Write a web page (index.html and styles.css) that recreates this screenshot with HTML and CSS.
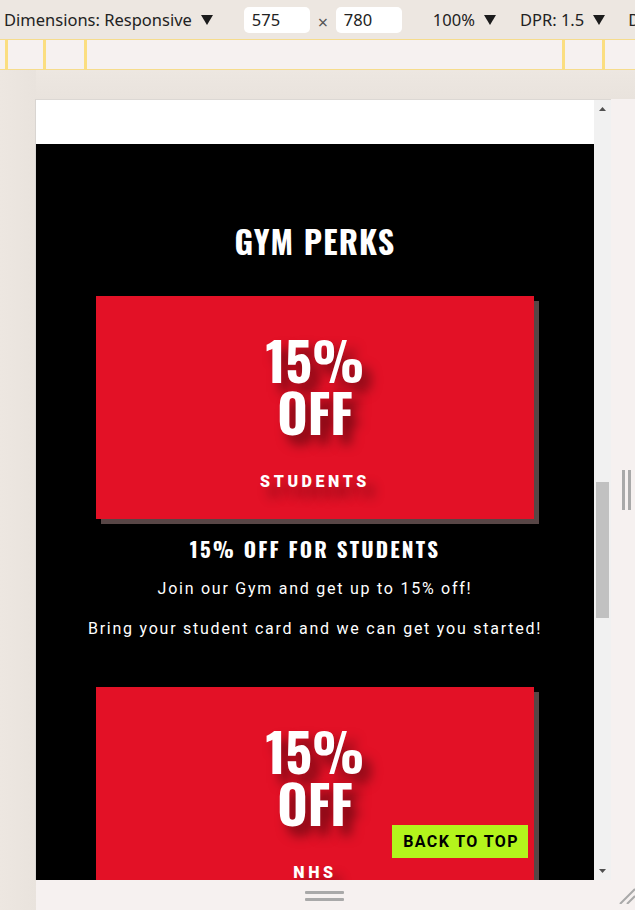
FILE: index.html
```html
<!DOCTYPE html>
<html lang="en">
<head>
<meta charset="utf-8">
<title>Gym Perks - Device Mode</title>
<link rel="stylesheet" href="styles.css">
</head>
<body>
<div class="devtools">
  <div class="toolbar">
    <span class="tb-label">Dimensions: Responsive</span>
    <svg class="caret" width="12" height="10" viewBox="0 0 12 10"><path d="M0 0H12L6 10Z"/></svg>
    <span class="tb-input tb-w">575</span>
    <span class="tb-times">×</span>
    <span class="tb-input">780</span>
    <span class="tb-label tb-zoom">100%</span>
    <svg class="caret" width="12" height="10" viewBox="0 0 12 10"><path d="M0 0H12L6 10Z"/></svg>
    <span class="tb-label tb-dpr">DPR: 1.5</span>
    <svg class="caret" width="12" height="10" viewBox="0 0 12 10"><path d="M0 0H12L6 10Z"/></svg>
    <span class="tb-label tb-more">D</span>
  </div>
  <div class="ruler">
    <span class="mark m1"></span>
    <span class="mark m2"></span>
    <span class="mark m3"></span>
    <span class="mark m4"></span>
    <span class="mark m5"></span>
  </div>
  <div class="stage">
    <div class="gutter"></div>
    <div class="workspace">
      <div class="topspace"></div>
      <div class="devrow">
        <div class="device">
          <div class="page">
            <div class="page-top"></div>
            <section class="perks">
              <h1 class="perks-title">GYM PERKS</h1>
              <div class="perk">
                <div class="card">
                  <h2 class="card-big">15%<br>OFF</h2>
                  <p class="card-tag">STUDENTS</p>
                </div>
                <h3 class="perk-title">15% OFF FOR STUDENTS</h3>
                <p class="perk-text">Join our Gym and get up to 15% off!</p>
                <p class="perk-text">Bring your student card and we can get you started!</p>
              </div>
              <div class="perk perk-next">
                <div class="card">
                  <h2 class="card-big">15%<br>OFF</h2>
                  <p class="card-tag">NHS</p>
                </div>
              </div>
            </section>
            <a class="back-top" href="#">BACK TO TOP</a>
          </div>
          <div class="scrollbar">
            <svg class="sb-arrow" width="7" height="4" viewBox="0 0 7 4"><path d="M3.5 0L7 4H0Z"/></svg>
            <div class="sb-track"><div class="sb-thumb"></div></div>
            <svg class="sb-arrow" width="7" height="4" viewBox="0 0 7 4"><path d="M0 0H7L3.5 4Z"/></svg>
          </div>
        </div>
        <div class="rhandle"><span class="vbar"></span><span class="vbar"></span></div>
      </div>
      <div class="bhandle">
        <div class="hbars"><span class="hbar"></span><span class="hbar"></span></div>
        <svg class="corner" width="18" height="18" viewBox="0 0 18 18"><path d="M18 3L3 18M18 10L10 18" stroke="#a9a9a9" stroke-width="2" fill="none"/></svg>
      </div>
    </div>
  </div>
</div>
</body>
</html>
```
FILE: styles.css
```css
* { box-sizing: border-box; }
html, body { margin: 0; padding: 0; }
body { width: 635px; height: 910px; overflow: hidden; background: #ece6e0; font-family: "Noto Sans", "Open Sans", sans-serif; }

.devtools { display: flex; flex-direction: column; height: 910px; }

.toolbar { height: 39px; display: flex; align-items: center; padding-left: 4px; background: #ede7e1; color: #222; font-size: 16.5px; white-space: nowrap; overflow: hidden; }
.toolbar > * { flex: none; }
.tb-label { line-height: 20px; }
.caret { fill: #1c1c1c; margin-left: 9px; }
.tb-input { width: 66px; height: 26px; background: #fff; border-radius: 5px; padding-left: 8px; line-height: 26px; }
.tb-w { margin-left: 31px; }
.tb-times { width: 26px; text-align: center; color: #555; font-size: 18px; padding-top: 4px; }
.tb-zoom { margin-left: 31px; }
.tb-dpr { margin-left: 24px; }
.tb-more { margin-left: 23px; }

.ruler { height: 31px; background: #f6f1f0; border-top: 1px solid #f6dc8c; border-bottom: 1px solid #f6dc8c; display: flex; }
.mark { width: 3px; height: 100%; background: #fbde80; flex: none; }
.m1 { margin-left: 5px; }
.m2 { margin-left: 35px; }
.m3 { margin-left: 38px; }
.m4 { margin-left: 475px; }
.m5 { margin-left: 37px; }

.stage { flex: 1; display: flex; }
.gutter { width: 36px; flex: none; background: linear-gradient(90deg, #ede7e1 0%, #e9e3dd 100%); }
.workspace { flex: 1; display: flex; flex-direction: column; }
.topspace { height: 29px; background: linear-gradient(180deg, #ede7e1 0%, #e9e3dd 100%); }
.devrow { display: flex; height: 781px; }
.device { display: flex; flex: none; width: 575px; height: 781px; border-top: 1px solid #dcd8d4; box-shadow: -1px 0 0 #d9d5d1; }
.rhandle { flex: 1; background: #f6f1f0; display: flex; gap: 3px; padding: 371px 0 0 11px; }
.vbar { width: 3px; height: 40px; background: #a9a9a9; }
.bhandle { flex: 1; background: #f6f1f0; position: relative; display: flex; justify-content: center; }
.hbars { display: flex; flex-direction: column; gap: 4px; padding-top: 11px; margin-left: -22px; }
.hbar { width: 39px; height: 3px; background: #a9a9a9; border-radius: 1px; }
.corner { position: absolute; right: 0; bottom: 6px; }

.page { width: 558px; height: 780px; overflow: hidden; position: relative; background: #000; }
.page-top { height: 44px; background: #fff; }

.scrollbar { width: 17px; background: #f1f1f1; display: flex; flex-direction: column; align-items: center; padding: 7px 0 7px; }
.sb-arrow { fill: #505050; flex: none; }
.sb-track { flex: 1; width: 100%; padding: 371px 2px 0; }
.sb-thumb { height: 136px; background: #c1c1c1; }

.perks { padding: 77px 20px 0; text-align: center; color: #fff; }
.perks-title { margin: 0; font-family: "Oswald", "Liberation Sans Narrow", "DejaVu Sans Condensed", sans-serif; font-weight: 700; font-size: 32px; line-height: 40px; letter-spacing: 1.2px; }
.perk { padding-top: 35px; }
.perk-next { padding-top: 46px; }
.card { margin: 0 40px; height: 223px; background: #e31126; box-shadow: 5px 5px 0 #584646; padding-top: 38px; }
.card-big { margin: 0; font-family: "Oswald", "Liberation Sans Narrow", "DejaVu Sans Condensed", sans-serif; font-weight: 700; font-size: 52px; line-height: 52px; text-shadow: 8px 9px 12px rgba(0,0,0,0.5); }
.card-tag { margin: 34px 0 0; font-family: Roboto, "Liberation Sans", sans-serif; font-weight: 900; font-size: 16px; line-height: 20px; letter-spacing: 3.6px; text-shadow: 8px 10px 12px rgba(0,0,0,0.45); }
.perk-title { margin: 18px 0 0; font-family: "Oswald", "Liberation Sans Narrow", "DejaVu Sans Condensed", sans-serif; font-weight: 700; font-size: 21px; line-height: 24px; letter-spacing: 2.2px; }
.perk-text { margin: 16px 0 0; font-family: Roboto, "Liberation Sans", sans-serif; font-size: 16px; line-height: 24px; letter-spacing: 1.75px; }

.back-top { position: absolute; right: 66px; bottom: 22px; height: 33px; padding: 0 9px 0 11px; background: #b3f41c; color: #000; text-decoration: none; font-family: Roboto, "Liberation Sans", sans-serif; font-weight: 700; font-size: 16px; line-height: 33px; letter-spacing: 1.4px; }
```
